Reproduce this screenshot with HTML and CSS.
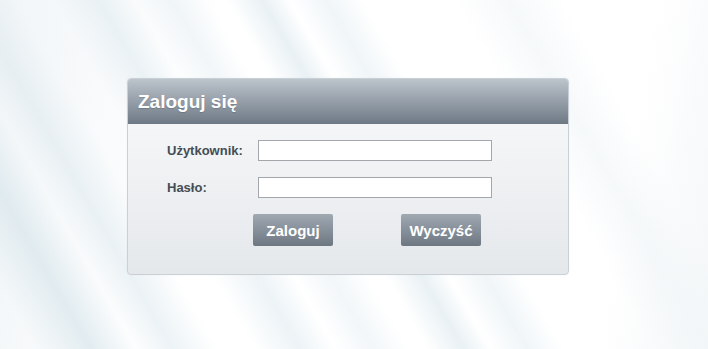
FILE: index.html
```html
<!DOCTYPE html>
<html lang="pl">
<head>
    <meta charset="UTF-8">
    <meta name="viewport" content="width=device-width, initial-scale=1.0">
    <title>Zaloguj się</title>
    <link rel="stylesheet" href="styles.css">
</head>
<body>
    <div class="page">
        <div class="login-box">
            <div class="login-header">Zaloguj się</div>
            <form class="login-form" onsubmit="return false;">
                <div class="fields">
                    <label for="user">Użytkownik:</label>
                    <input type="text" id="user">
                    <label for="pass">Hasło:</label>
                    <input type="password" id="pass">
                </div>
                <div class="buttons">
                    <button type="submit" class="btn">Zaloguj</button>
                    <button type="reset" class="btn">Wyczyść</button>
                </div>
            </form>
        </div>
    </div>
</body>
</html>
```

FILE: styles.css
```css
html, body {
    height: 100%;
    margin: 0;
    overflow: hidden;
}
body {
    font-family: 'Liberation Sans', Arial, sans-serif;
    background-color: #ffffff;
    background-image:
        linear-gradient(60deg, transparent 4%, rgba(210, 226, 233, 0.6) 10%, rgba(255,255,255,0) 15%, rgba(218, 231, 237, 0.5) 19%, transparent 24%),
        linear-gradient(60deg, transparent 28%, rgba(222, 234, 239, 0.55) 33%, rgba(255,255,255,0) 37%, rgba(226, 236, 241, 0.45) 41%, transparent 45%),
        linear-gradient(60deg, transparent 47%, rgba(224, 235, 240, 0.7) 51%, rgba(255,255,255,0) 54%, rgba(230, 239, 243, 0.6) 58%, transparent 62%),
        linear-gradient(60deg, transparent 72%, rgba(240, 245, 247, 0.6) 78%, transparent 84%),
        linear-gradient(100deg, #f1f5f7 0%, #ffffff 30%, #ffffff 85%, #f4f7f8 100%);
}
.page {
    padding: 78px 0 0 127px;
}
.login-box {
    width: 440px;
    border: 1px solid #c9d0d6;
    border-radius: 4px;
    overflow: hidden;
    background: linear-gradient(to bottom, #f9fafb, #e5e8eb);
    box-shadow: 0 0 2px rgba(0, 0, 0, 0.05);
}
.login-header {
    height: 45px;
    line-height: 45px;
    padding-left: 10px;
    font-size: 19px;
    font-weight: bold;
    color: #ffffff;
    background: linear-gradient(to bottom, #bcc4cc, #6e7985);
    text-shadow: 0 1px 1px rgba(0, 0, 0, 0.15);
}
.login-form {
    padding: 16px 0 28px 39px;
}
.fields {
    display: grid;
    grid-template-columns: 91px 234px;
    row-gap: 16px;
    align-items: center;
}
.fields label {
    font-size: 13px;
    font-weight: bold;
    color: #444c54;
}
.fields input {
    box-sizing: border-box;
    width: 234px;
    height: 21px;
    margin: 0;
    border: 1px solid #a3a7ab;
    background: #ffffff;
    padding: 0 3px;
    font: 13px 'Liberation Sans', Arial, sans-serif;
    outline: none;
}
.buttons {
    display: flex;
    gap: 68px;
    margin-top: 16px;
    padding-left: 86px;
}
.btn {
    width: 80px;
    height: 32px;
    border: none;
    border-radius: 2px;
    background: linear-gradient(to bottom, #a0a9b2, #6d7782);
    color: #ffffff;
    font: bold 15px 'Liberation Sans', Arial, sans-serif;
    cursor: pointer;
    padding: 0;
}
.btn:hover {
    background: linear-gradient(to bottom, #8e97a1, #5f6974);
}
```
